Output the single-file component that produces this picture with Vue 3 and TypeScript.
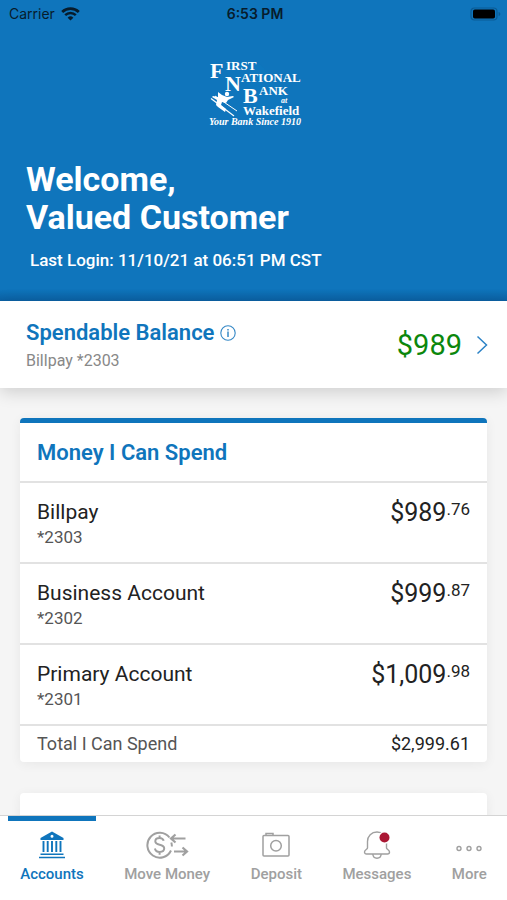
<script setup lang="ts">
interface Account {
  name: string
  mask: string
  dollars: string
  cents: string
}

const accounts: Account[] = [
  { name: 'Billpay', mask: '*2303', dollars: '$989', cents: '.76' },
  { name: 'Business Account', mask: '*2302', dollars: '$999', cents: '.87' },
  { name: 'Primary Account', mask: '*2301', dollars: '$1,009', cents: '.98' },
]
</script>

<template>
  <div class="screen">
    <div class="scroll">
      <header class="hero">
        <div class="status">
          <span class="carrier">
            Carrier
            <svg width="19" height="14" viewBox="0 0 19 14" fill="none" stroke="#071c2c" aria-hidden="true">
              <path d="M1.2 5A12 12 0 0 1 17.8 5" stroke-width="2.8" />
              <path d="M4.2 8.2a7.6 7.6 0 0 1 10.6 0" stroke-width="2.5" />
              <path d="M9.5 13.6 6.6 10.7a4.1 4.1 0 0 1 5.8 0z" fill="#071c2c" stroke="none" />
            </svg>
          </span>
          <span class="clock">6:53 PM</span>
          <span class="battery">
            <svg width="31" height="14" viewBox="0 0 31 14" aria-hidden="true">
              <rect x="1" y="1" width="26" height="12" rx="3.5" fill="none" stroke="#0b5c95" stroke-width="1.2" />
              <rect x="3" y="2.5" width="22" height="9" rx="1.8" fill="#000" />
              <path d="M28.6 5v4c1.1-.3 1.7-1 1.7-2s-.6-1.7-1.7-2z" fill="#0b5c95" />
            </svg>
          </span>
        </div>

        <svg class="logo" width="100" height="76" viewBox="0 0 100 76" role="img" aria-label="First National Bank of Wakefield">
          <path d="M50 2 60 10 64 22 84 34 76 46 90 56 84 66 74 72 62 60 48 44 44 20z" fill="#0a80c4" opacity=".25" />
          <g fill="#fff" font-weight="700">
            <text x="6" y="20" font-size="22">F</text>
            <text x="22" y="12" font-size="13">IRST</text>
            <text x="21" y="33" font-size="22">N</text>
            <text x="37" y="24" font-size="13">ATIONAL</text>
            <text x="39" y="45" font-size="22">B</text>
            <text x="55" y="37" font-size="13">ANK</text>
            <text x="77" y="45" font-size="8" font-style="italic">at</text>
            <text x="39" y="57" font-size="13">Wakefield</text>
            <text x="5" y="67" font-size="10" font-style="italic">Your Bank Since 1910</text>
          </g>
          <g fill="#fff">
            <circle cx="23" cy="36" r="2.2" />
            <path d="m14 34 4 3 5 2 6-1 1 1-6 3-2 3-4-1-1 3 5 4-1 3-7-5-2-2 1-5-5-3 1-1 5 1z" />
            <path d="M7 40.500 30 58" stroke="#fff" stroke-width="1.2" />
            <path d="M11 38 33 53" stroke="#fff" stroke-width="1" />
          </g>
        </svg>

        <h1>Welcome,<br />Valued Customer</h1>
        <p class="login">Last Login: 11/10/21 at 06:51 PM CST</p>
      </header>

      <section class="balance">
        <div>
          <h2>
            Spendable Balance
            <button type="button" class="info" aria-label="About spendable balance">
              <svg width="16" height="16" viewBox="0 0 16 16" fill="none" stroke="#3588c6" aria-hidden="true">
                <circle cx="8" cy="8" r="7.2" stroke-width="1.1" />
                <path d="M8 6.5V12" stroke-width="1.5" />
                <path d="M8 4v1.5" stroke-width="1.5" />
              </svg>
            </button>
          </h2>
          <p>Billpay *2303</p>
        </div>
        <a class="available" href="#spendable">
          $989
          <svg width="12" height="20" viewBox="0 0 12 20" fill="none" stroke="#2b82c6" stroke-width="1.5" aria-hidden="true">
            <path d="M1.5 1.5 10.5 10 1.5 18.5" />
          </svg>
        </a>
      </section>

      <main>
        <section class="card">
          <h2>Money I Can Spend</h2>
          <ul>
            <li v-for="account in accounts" :key="account.mask">
              <div>
                <h3>{{ account.name }}</h3>
                <p>{{ account.mask }}</p>
              </div>
              <span class="amount">{{ account.dollars }}<span class="cents">{{ account.cents }}</span></span>
            </li>
          </ul>
          <div class="total">
            <span>Total I Can Spend</span>
            <strong>$2,999.61</strong>
          </div>
        </section>
        <section class="card next"></section>
      </main>
    </div>

    <nav>
      <a href="#accounts" class="active" aria-current="page">
        <svg width="28" height="28" viewBox="0 0 28 28" aria-hidden="true">
          <path fill="currentColor" fill-rule="evenodd" d="M14 .5 25.500 7v2h-23V7zM14 3.800a1.500 1.500 0 1 0 0 3 1.500 1.500 0 0 0 0-3z" />
          <path d="M5.500 10v11M9.700 10v11M14 10v11M18.300 10v11M22.500 10v11" stroke="currentColor" stroke-width="1.9" />
          <path d="M2.500 23.200h23M1 26.500h26" stroke="currentColor" stroke-width="1.6" />
        </svg>
        <span>Accounts</span>
      </a>
      <a href="#move">
        <svg width="44" height="28" viewBox="0 0 44 28" fill="none" stroke="currentColor" aria-hidden="true">
          <path d="M24.500 6.500A12.400 12.400 0 1 0 26 19.500M26.300 11.500a12.400 12.400 0 0 1 .6 4" stroke-width="2" />
          <path d="M18.700 9.800c-.6-2-2.200-2.800-4.200-2.800-2.300 0-4.200 1.100-4.200 3.300 0 4.600 8.900 2.300 8.900 7 0 2.300-2 3.600-4.500 3.600-2.400 0-4.300-1.100-4.800-3.400M14.600 4.500V7M14.600 21v2.700" stroke-width="2" />
          <path d="M40.500 7.500H26M30.500 3.500l-4.500 4 4.500 4M29 20.500h13M37.500 16.500l4.500 4-4.500 4" stroke-width="2.2" />
        </svg>
        <span>Move Money</span>
      </a>
      <a href="#deposit">
        <svg width="28" height="28" viewBox="0 0 28 28" fill="none" stroke="currentColor" stroke-width="1.5" aria-hidden="true">
          <rect x="1" y="4.5" width="26" height="20.5" rx="1" />
          <path d="M4 4.500V2.500h7v2" />
          <circle cx="14" cy="14.8" r="5.3" />
        </svg>
        <span>Deposit</span>
      </a>
      <a href="#messages">
        <svg width="28" height="28" viewBox="0 0 28 28" fill="none" stroke="currentColor" stroke-width="1.4" aria-hidden="true">
          <path d="M4.500 17V10.500C4.500 5 8.500 1 14 1s9.500 4 9.500 9.500V17c0 1.300 3 2 3 4 0 1.200-.8 2-2 2h-21c-1.200 0-2-.8-2-2 0-2 3-2.700 3-4z" />
          <path d="M9.800 23c.2 2.600 1.800 4.200 4.200 4.200s4-1.600 4.200-4.200" />
          <circle cx="21.5" cy="6.5" r="6.3" fill="#fff" stroke="none" />
          <circle cx="21.5" cy="6.5" r="5" fill="#aa1733" stroke="none" />
        </svg>
        <span>Messages</span>
      </a>
      <a href="#more">
        <svg width="28" height="28" viewBox="0 0 28 28" fill="none" stroke="currentColor" stroke-width="1.4" aria-hidden="true">
          <circle cx="4" cy="17.5" r="2" />
          <circle cx="14" cy="17.5" r="2" />
          <circle cx="24" cy="17.5" r="2" />
        </svg>
        <span>More</span>
      </a>
    </nav>
  </div>
</template>

<style>
body {
  background: #f5f5f5;
}
</style>

<style scoped>
.screen {
  display: flex;
  flex-direction: column;
  height: 100vh;
  font-family: Roboto, "Liberation Sans", sans-serif;
  color: #222;
  background: #f5f5f5;
}

h1, h2, h3, p, ul {
  margin: 0;
  padding: 0;
}

a {
  color: inherit;
  text-decoration: none;
}

.scroll {
  flex: 1;
  min-height: 0;
  overflow: hidden;
}

.hero {
  display: flex;
  flex-direction: column;
  padding-bottom: 30px;
  color: #fff;
  background: linear-gradient(to top, #0b61a4, #0f75bc 12px);
}

.status {
  display: grid;
  grid-template-columns: 1fr auto 1fr;
  align-items: center;
  height: 28px;
  padding: 0 6px 0 9px;
  font: 500 14px/20px Inter, sans-serif;
  color: #071c2c;
}

.carrier {
  display: flex;
  align-items: center;
  gap: 6px;
  font-weight: 400;
}

.clock {
  font-weight: 600;
}

.battery {
  display: flex;
  justify-content: flex-end;
}

.logo {
  align-self: center;
  margin: 30px 0 26px;
  font-family: "Liberation Serif", serif;
}

h1 {
  padding: 0 26px;
  font-size: 34px;
  line-height: 38px;
  font-weight: 700;
}

.login {
  padding: 13px 30px 0;
  font-size: 17px;
  line-height: 22px;
  font-weight: 500;
}

.balance {
  display: flex;
  align-items: center;
  justify-content: space-between;
  padding: 18px 19px 15px 26px;
  background: #fff;
  box-shadow: 0 4px 16px rgba(0, 0, 0, 0.16);
}

h2 {
  display: flex;
  align-items: center;
  gap: 6px;
  font-size: 22px;
  line-height: 28px;
  font-weight: 600;
  color: #0f75bc;
}

.info {
  display: flex;
  padding: 0;
  border: 0;
  background: none;
}

.balance p {
  margin-top: 2px;
  font-size: 16px;
  line-height: 24px;
  color: #888;
}

.available {
  display: flex;
  align-items: center;
  gap: 14px;
  padding-bottom: 2px;
  font-size: 29px;
  line-height: 32px;
  color: #0c870c;
}

main {
  display: flex;
  flex-direction: column;
  gap: 31px;
  padding: 30px 20px;
}

.card {
  border-top: 5px solid #0f75bc;
  border-radius: 4px;
  background: #fff;
  box-shadow: 0 2px 12px rgba(0, 0, 0, 0.06);
}

.card h2 {
  padding: 16px 17px 14px;
}

.next {
  height: 120px;
  border-top-color: #fff;
}

ul {
  list-style: none;
}

li {
  display: flex;
  justify-content: space-between;
  padding: 16px 17px 13px;
  border-top: 2px solid #e2e2e2;
}

h3 {
  font-size: 21px;
  line-height: 27px;
  font-weight: 400;
}

li p {
  font-size: 17px;
  line-height: 23px;
  color: #555;
}

.amount {
  display: flex;
  align-items: flex-start;
  font-size: 25px;
  line-height: 28px;
}

.cents {
  font-size: 17px;
  line-height: 20px;
}

.total {
  display: flex;
  justify-content: space-between;
  padding: 6px 17px;
  border-top: 2px solid #e2e2e2;
  font-size: 18px;
  line-height: 24px;
  color: #555;
}

.total strong {
  font-weight: 400;
  color: #222;
}

nav {
  display: flex;
  justify-content: space-around;
  height: 84px;
  border-top: 1px solid #d4d4d4;
  background: #fff;
}

nav a {
  display: flex;
  flex-direction: column;
  align-items: center;
  gap: 6px;
  padding: 10px 12px 0;
  border-top: 5px solid transparent;
  font-size: 15px;
  line-height: 18px;
  font-weight: 500;
  color: #a0a0a0;
}

nav a.active {
  border-top-color: #0f75bc;
  color: #0f75bc;
}
</style>
